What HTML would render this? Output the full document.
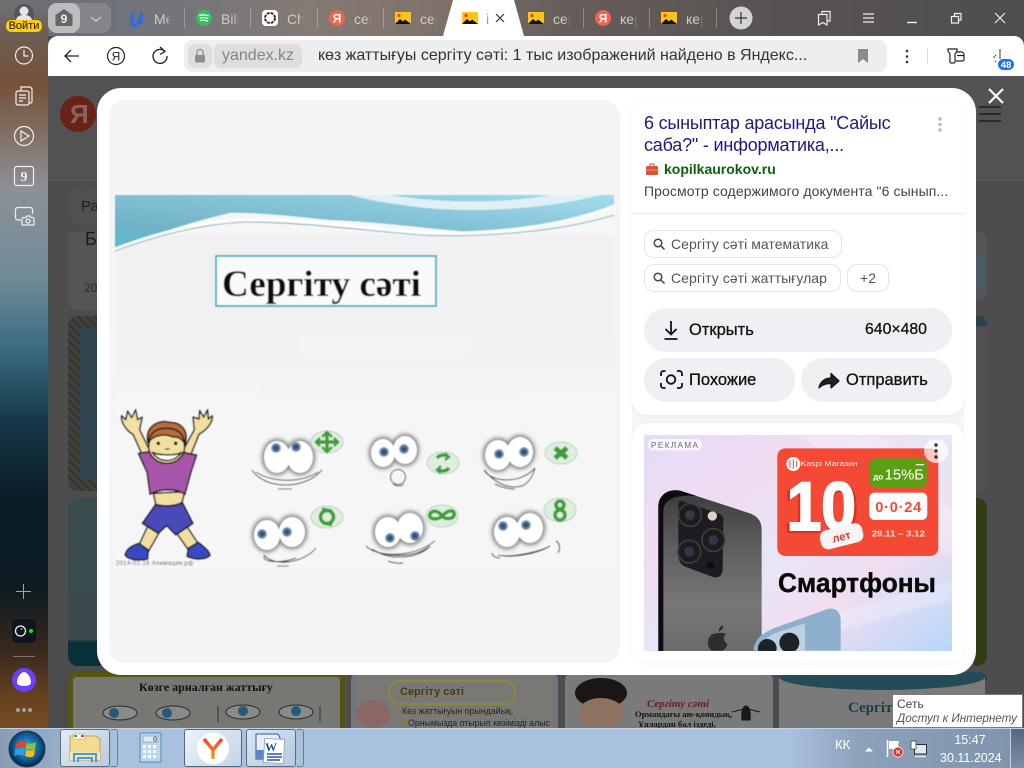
<!DOCTYPE html>
<html lang="ru"><head><meta charset="utf-8"><title>Сергіту сәті</title>
<style>
html,body{margin:0;padding:0;width:1024px;height:768px;overflow:hidden;background:#4d4d4d}
body{position:relative;font-family:"Liberation Sans","DejaVu Sans",sans-serif;color:#222}
.a{position:absolute;white-space:nowrap}
svg{position:absolute;left:0;top:0;overflow:visible}
.tt{font-size:14px;color:#d0ccc8;top:10px;overflow:hidden;height:18px;line-height:18px;-webkit-mask-image:linear-gradient(90deg,#000 70%,transparent);mask-image:linear-gradient(90deg,#000 70%,transparent)}
.sep{position:absolute;top:8px;width:1px;height:20px;background:rgba(255,255,255,.28)}
.chip{position:absolute;box-sizing:border-box;border:1px solid #e4e5e8;border-radius:10px;background:#fff;height:28px;line-height:26px;font-size:14px;color:#555;letter-spacing:.05px}
.btn{position:absolute;background:#eef0f4;border-radius:22px;height:44px;line-height:44px;font-size:16.5px;color:#111;-webkit-text-stroke:.3px #111}
</style></head><body>

<!-- wallpaper sidebar -->
<div class="a" style="left:0;top:0;width:48px;height:728px;background:linear-gradient(180deg,#6f7279 0,#6e5d52 35px,#75513a 85px,#7f6a5c 125px,#8c9198 190px,#6f8a97 280px,#3a6a7f 350px,#18384a 420px,#0a1c26 500px,#0d1b22 590px,#38281f 650px,#684320 700px,#784c26 728px)"></div>
<!-- tab strip -->
<div class="a" style="left:48px;top:0;width:976px;height:36px;background:linear-gradient(90deg,#6d7079 0,#74757a 130px,#857a74 260px,#7f736b 380px,#665d59 520px,#595453 700px,#4f4d4d 976px)"></div>

<!-- dimmed page -->
<div class="a" style="left:48px;top:76px;width:976px;height:652px;background:#4d4d4d"></div>
<div class="a" style="left:48px;top:76px;width:976px;height:104px;background:#525252;border-bottom:1px solid #5c5c5c"></div>
<div class="a" style="left:60px;top:96px;width:36px;height:36px;border-radius:50%;background:#6b2216"></div>
<div class="a" style="left:70px;top:99px;font:bold 26px 'Liberation Sans',sans-serif;color:#85655d">Я</div>
<div class="a" style="left:68px;top:188px;width:60px;height:36px;border-radius:14px;background:#505050;box-shadow:0 0 2px #5c5c5c"></div>
<div class="a" style="left:81px;top:198px;font-size:15px;color:#222">Ра</div>
<div class="a" style="left:68px;top:232px;width:40px;height:78px;border-radius:0 0 10px 10px;background:#555"></div>
<div class="a" style="left:85px;top:229px;font-size:18px;color:#1c1c1c">Бе</div>
<div class="a" style="left:84px;top:281px;font-size:12px;color:#2a2a2a">20</div>
<div class="a" style="left:68px;top:316px;width:40px;height:175px;border-radius:10px;background:repeating-linear-gradient(45deg,#4a3f33 0 3px,#30383c 3px 6px);"></div>
<div class="a" style="left:80px;top:328px;width:30px;height:151px;background:#2f444f"></div>
<div class="a" style="left:68px;top:498px;width:40px;height:168px;border-radius:10px;background:linear-gradient(180deg,#3b4c4e 0,#3a4a4c 84%,#07303a 86%,#07303a 100%)"></div>
<!-- right strip -->
<div class="a" style="left:974px;top:232px;width:13px;height:68px;border-radius:0 8px 8px 0;background:#565656"></div>
<div class="a" style="left:974px;top:252px;width:11px;height:38px;background:#4b5a64;border-radius:0 4px 4px 0"></div>
<div class="a" style="left:974px;top:316px;width:13px;height:10px;border-radius:0 8px 0 0;background:#28434e"></div>
<div class="a" style="left:974px;top:326px;width:13px;height:166px;background:#505050"></div>
<div class="a" style="left:974px;top:498px;width:13px;height:168px;border-radius:0 10px 10px 0;background:#303c12"></div>
<div class="a" style="left:974px;top:672px;width:13px;height:8px;border-radius:0 8px 0 0;background:#27424d"></div>
<div class="a" style="left:979px;top:106px;width:22px;height:2px;background:#2b2b2b"></div>
<div class="a" style="left:979px;top:113px;width:22px;height:2px;background:#2b2b2b"></div>
<div class="a" style="left:979px;top:120px;width:22px;height:2px;background:#2b2b2b"></div>

<!-- bottom tiles -->
<div class="a" style="left:68px;top:672px;width:267px;height:56px;border:5px solid #55570f;border-bottom:0;border-radius:8px 8px 0 0;background:#777774;box-sizing:content-box"></div>
<div class="a" style="left:139px;top:680px;font:bold 12px 'Liberation Serif',serif;color:#111">Көзге арналған жаттығу</div>
<svg width="1024" height="768">
 <g fill="#8a8a88" stroke="#2a2a2a" stroke-width="1">
  <ellipse cx="120" cy="713" rx="17" ry="7"/><ellipse cx="173" cy="713" rx="17" ry="7"/><ellipse cx="243" cy="712" rx="17" ry="7"/><ellipse cx="296" cy="712" rx="17" ry="7"/>
 </g>
 <circle cx="114" cy="713" r="5" fill="#245a78"/><circle cx="167" cy="713" r="5" fill="#245a78"/><circle cx="243" cy="711" r="5" fill="#245a78"/><circle cx="296" cy="711" r="5" fill="#245a78"/>
 <path d="M218 706v16M320 706v16" stroke="#333"/>
</svg>
<div class="a" style="left:351px;top:672px;width:207px;height:56px;border-radius:8px 8px 0 0;background:#70767c"></div>
<div class="a" style="left:356px;top:675px;width:196px;height:53px;background:#7a7874"></div>
<div class="a" style="left:388px;top:680px;width:124px;height:21px;border:2px solid #8a8a3a;border-radius:14px"></div>
<div class="a" style="left:400px;top:686px;font:bold 11px 'Liberation Sans',sans-serif;color:#4a3a0e">Сергіту сәті</div>
<div class="a" style="left:402px;top:706px;font-size:8.800px;color:#252525">Көз жаттығуын орындайық.</div>
<div class="a" style="left:403px;top:720px;width:4px;height:4px;background:#8a7a20"></div>
<div class="a" style="left:408px;top:718px;width:145px;overflow:hidden;font-size:8.800px;color:#252525">Орнымызда отырып көзімізді алыс бір</div>
<div class="a" style="left:356px;top:700px;width:34px;height:28px;border-radius:50%;background:#8a6763"></div>
<div class="a" style="left:565px;top:672px;width:208px;height:56px;border-radius:8px 8px 0 0;background:#7a7a78"></div>
<div class="a" style="left:575px;top:678px;width:52px;height:30px;border-radius:50%;background:#1b1614"></div>
<div class="a" style="left:578px;top:698px;width:46px;height:30px;border-radius:50%;background:#8d7262"></div>
<div class="a" style="left:647px;top:698px;font:italic bold 11px 'Liberation Serif',serif;color:#6a1e20">Сергіту сәті</div>
<div class="a" style="left:635px;top:709px;font:bold 8.5px 'Liberation Serif',serif;color:#161616">Ормандағы аю-қояндық,</div>
<div class="a" style="left:638px;top:719px;font:bold 8.5px 'Liberation Serif',serif;color:#161616">Ұялардан бал іздеді,</div>
<svg width="1024" height="768"><path d="M742 720c-1-8 1-14 4-14s5 6 4 14zM732 712l12-3M760 712l-12-3" fill="#181818" stroke="#181818"/></svg>
<div class="a" style="left:779px;top:672px;width:206px;height:56px;border-radius:8px 8px 0 0;background:#7a7a7a;overflow:hidden"><div style="position:absolute;left:0;top:-8px;width:206px;height:26px;background:#254a58;border-radius:0 0 50% 50%"></div></div>
<div class="a" style="left:848px;top:700px;font:bold 15px 'Liberation Serif',serif;color:#1c3a48">Сергіту</div>

<!-- toolbar -->
<div class="a" style="left:48px;top:36px;width:976px;height:40px;background:#fff;border-radius:10px 10px 0 0"></div>
<div class="a" style="left:184px;top:40px;width:703px;height:32px;background:#eeeeee;border-radius:8px"></div>
<div class="a" style="left:188px;top:44px;width:24px;height:24px;background:#dedede;border-radius:7px"></div>
<div class="a" style="left:214px;top:44px;width:88px;height:24px;background:#dedede;border-radius:7px"></div>
<div class="a" style="left:222px;top:47px;font-size:16px;line-height:18px;color:#858585">yandex.kz</div>
<div class="a" style="left:318px;top:47px;font-size:16px;line-height:18px;color:#333">көз жаттығуы сергіту сәті: 1 тыс изображений найдено в Яндекс...</div>

<!-- active tab -->
<svg width="1024" height="76" style="z-index:1">
 <path d="M443 36 L453 0 L514 0 L524 36 Z" fill="#fff"/>
</svg>
<div class="a tt" style="left:154px;width:17px;z-index:2">Me</div>
<div class="a tt" style="left:221px;width:18px;z-index:2">Bili</div>
<div class="a tt" style="left:287px;width:17px;z-index:2">Cha</div>
<div class="a tt" style="left:354px;width:17px;z-index:2">сер</div>
<div class="a tt" style="left:420px;width:17px;z-index:2">сер</div>
<div class="a tt" style="left:553px;width:17px;z-index:2">сер</div>
<div class="a tt" style="left:620px;width:17px;z-index:2">кер</div>
<div class="a tt" style="left:686px;width:17px;z-index:2">кер</div>
<div class="a" style="left:486px;top:10px;font-size:14px;line-height:18px;color:#999;z-index:2">і</div>
<div class="sep" style="left:184px"></div><div class="sep" style="left:250px"></div><div class="sep" style="left:317px"></div><div class="sep" style="left:383px"></div><div class="sep" style="left:583px"></div><div class="sep" style="left:649px"></div><div class="sep" style="left:716px"></div>

<!-- profile and group -->
<div class="a" style="left:48px;top:3px;width:63px;height:30px;border-radius:9px;background:rgba(255,255,255,.14)"></div>
<div class="a" style="left:48px;top:3px;width:32px;height:30px;border-radius:9px;background:rgba(255,255,255,.46)"></div>
<div class="a" style="left:14px;top:4px;width:20px;height:20px;border-radius:50%;background:#53565c"></div>
<div class="a" style="left:6px;top:20px;width:36px;height:12px;background:#ffcc00;border-radius:5px;font-size:11px;line-height:12px;text-align:center;color:#111;z-index:4">Войти</div>

<svg width="1024" height="768" style="z-index:3">
 <!-- profile figure -->
 <circle cx="24" cy="11" r="4.5" fill="#e8e6e4"/><path d="M16 20c1-4 4-5 8-5s7 1 8 5z" fill="#e8e6e4"/>
 <!-- group house -->
 <path d="M55.500 15 L64 9 L72.500 15 V24 a2 2 0 0 1-2 2 H57.500 a2 2 0 0 1-2-2z" fill="#666668"/>
 <text x="64" y="23" font-family="Liberation Sans" font-weight="bold" font-size="12" fill="#eee" text-anchor="middle">9</text>
 <path d="M91 17l5 4 5-4" fill="none" stroke="#c9c5c1" stroke-width="1.400"/>
 <!-- tab icons -->
 <path d="M133 12 L132 22 Q132 27 137 25 L142 13 Q141 20 141 24" fill="none" stroke="#2f6be0" stroke-width="3"/>
 <circle cx="204" cy="18" r="8" fill="#2fc15c"/><path d="M199 15.500q5-1.500 10 .5M199.500 18q5-1 9 .6M200 20.500q4-.8 8 .5" fill="none" stroke="#fff" stroke-width="1.200"/>
 <rect x="262" y="10" width="16" height="16" rx="4" fill="#fff"/><circle cx="270" cy="18" r="5" fill="none" stroke="#333" stroke-width="2" stroke-dasharray="3 1"/>
 <circle cx="337" cy="18" r="8" fill="#f8604a"/><text x="337" y="22.500" font-family="Liberation Sans" font-weight="bold" font-size="12" fill="#fff" text-anchor="middle">Я</text>
 <circle cx="603" cy="18" r="8" fill="#f8604a"/><text x="603" y="22.500" font-family="Liberation Sans" font-weight="bold" font-size="12" fill="#fff" text-anchor="middle">Я</text>
 <g id="ii"><rect x="395" y="12" width="16" height="12" fill="#fcc419"/><circle cx="399" cy="15.500" r="1.600" fill="#e42"/><path d="M395 24l5-5 3 2.500 2-2 6 4.500z" fill="#111"/></g>
 <use href="#ii" x="67"/><use href="#ii" x="133"/><use href="#ii" x="266"/>
 <!-- tab close -->
 <path d="M496 14l8 8M504 14l-8 8" stroke="#333" stroke-width="1.200"/>
 <!-- new tab -->
 <circle cx="741" cy="18" r="11.500" fill="#d6d4d2"/><path d="M741 12v12M735 18h12" stroke="#333" stroke-width="1.200"/>
 <!-- window icons -->
 <path d="M818.500 14.500h8.500v10.500l-4.250-2.500-4.250 2.500z" fill="none" stroke="#eee" stroke-width="1.200"/><path d="M822 14.500v-3h8v9.500h-3" fill="none" stroke="#eee" stroke-width="1.200"/>
 <path d="M863 14h11M863 18h11M863 22h11" stroke="#eee" stroke-width="1.200"/>
 <path d="M907 22.500h10" stroke="#eee" stroke-width="1.400"/>
 <path d="M951.500 16.500h7v6.500h-7zM954.500 16.500v-3h6.500v6.500h-2.500" fill="none" stroke="#eee" stroke-width="1.200"/>
 <path d="M995 13l10 10M1005 13l-10 10" stroke="#eee" stroke-width="1.200"/>

 <!-- toolbar icons -->
 <path d="M79 56H65.500M71 50l-6 6 6 6" fill="none" stroke="#222" stroke-width="1.300"/>
 <circle cx="116" cy="56" r="8.500" fill="none" stroke="#222" stroke-width="1.200"/><text x="116" y="60.500" font-family="Liberation Sans" font-size="12" fill="#222" text-anchor="middle">Я</text>
 <path d="M165 51.500a7 7 0 1 0 2 4.500" fill="none" stroke="#222" stroke-width="1.300"/><path d="M160 47l5 4.500-5 3" fill="none" stroke="#222" stroke-width="1.300"/>
 <rect x="195" y="55" width="10" height="7.500" rx="1.300" fill="#8e8e8e"/><path d="M197 55v-2.500a3 3 0 0 1 6 0V55" fill="none" stroke="#8e8e8e" stroke-width="1.300"/>
 <path d="M858 49h10v14l-5-4-5 4z" fill="#8a8a8a"/>
 <circle cx="907" cy="51" r="1.300" fill="#333"/><circle cx="907" cy="56.500" r="1.300" fill="#333"/><circle cx="907" cy="62" r="1.300" fill="#333"/>
 <path d="M927.500 48v16" stroke="#ddd"/>
 <path d="M948 49h9v2l-2 3v6a2 2 0 0 1-2 3h-1a2 2 0 0 1-2-3v-6l-2-3zM957 52h3a3 3 0 0 1 4 3v5a2 2 0 0 1-2 1h-6M957 55.500h7" fill="none" stroke="#222" stroke-width="1.200"/>
 <path d="M1000 49v10M996 56l-1-1M993 57h2M996 61l-1 1" stroke="#333" stroke-width="1"/>
 <rect x="998" y="59" width="16" height="11" rx="5.500" fill="#1a73e8"/><text x="1006" y="68" font-family="Liberation Sans" font-size="9.500" font-weight="bold" fill="#fff" text-anchor="middle">48</text>

 <!-- sidebar icons -->
 <g fill="none" stroke="#f2eeea" stroke-width="1.200">
  <circle cx="24" cy="55.500" r="8.500"/><path d="M24 50v6h4.500"/>
  <rect x="16" y="91" width="13" height="14" rx="2"/><path d="M29 103h1.500a1.500 1.500 0 0 0 1.500-1.500V89l-1.500-2H21v4"/><path d="M19 95h7M19 98h7M19 101h4"/>
  <circle cx="24" cy="136" r="9.500"/><path d="M21 131v10l8-5z"/>
  <rect x="14.500" y="166.500" width="19" height="19" rx="2.500"/>
  <path d="M21 220h-3a2.500 2.500 0 0 1-2.500-2.500V210a2.500 2.500 0 0 1 2.500-2.500h12a2.500 2.500 0 0 1 2.500 2.500v4"/>
  <path d="M22 219a1.500 1.500 0 0 1 1.500-1.500H26l1-1.500h3l1 1.500h1.500a1.500 1.500 0 0 1 1.500 1.500v6H22z"/><circle cx="28" cy="221" r="2"/>
 </g>
 <text x="24" y="181" font-family="Liberation Serif" font-size="14" font-weight="bold" fill="#f2eeea" text-anchor="middle">9</text>
 <path d="M23.500 584v15M16 591.500h15" stroke="#a9a5a1" stroke-width="1"/>
 <rect x="12" y="619" width="24" height="24" rx="5" fill="#10171c"/>
 <circle cx="20.500" cy="631" r="5" fill="#10171c" stroke="#eee" stroke-width="1.300"/><circle cx="21.500" cy="629" r=".9" fill="#bbb"/><circle cx="31" cy="631" r="2" fill="#1ae51a"/>
 <path d="M13 656.500h22" stroke="#80766a" stroke-width="1"/>
 <circle cx="24" cy="680" r="12" fill="#6b3ff5"/><path d="M24 672c3.500 0 7 6 7 10 0 3-3 4-7 4s-7-1-7-4c0-4 3.500-10 7-10z" fill="#fff"/>
 <circle cx="18" cy="710" r="2" fill="#a9a19a"/><circle cx="24" cy="710" r="2" fill="#a9a19a"/><circle cx="30" cy="710" r="2" fill="#a9a19a"/>
</svg>

<!-- modal -->
<div class="a" style="left:97px;top:88px;width:879px;height:587px;background:#fff;border-radius:24px;z-index:4"></div>
<div class="a" style="left:109px;top:100px;width:511px;height:563px;background:#f5f5f5;border-radius:16px;z-index:4"></div>
<div class="a" style="left:632px;top:100px;width:332px;height:563px;background:#f5f6f8;border-radius:16px;z-index:4"></div>
<div class="a" style="left:632px;top:100px;width:332px;height:315px;background:#fff;border-radius:16px;z-index:4;box-shadow:0 1px 6px rgba(0,0,0,.05)"></div>
<div class="a" style="left:632px;top:423px;width:332px;height:240px;background:#fff;border-radius:16px;z-index:4;box-shadow:0 1px 6px rgba(0,0,0,.05)"></div>
<div class="a" style="left:632px;top:213px;width:332px;height:1px;background:#eceded;z-index:4"></div>

<div style="position:absolute;left:0;top:0;z-index:5">
<div class="a" style="left:644px;top:112px;font-size:18px;line-height:22px;color:#1b1b82;letter-spacing:-.2px">6 сыныптар арасында "Сайыс</div>
<div class="a" style="left:644px;top:134px;font-size:18px;line-height:22px;color:#1b1b82;letter-spacing:-.2px">саба?" - информатика,...</div>
<div class="a" style="left:664px;top:161px;font-size:14px;line-height:17px;font-weight:bold;color:#0b620b">kopilkaurokov.ru</div>
<div class="a" style="left:644px;top:183px;font-size:14px;line-height:17px;color:#444;letter-spacing:.1px">Просмотр содержимого документа "6 сынып...</div>
<div class="chip" style="left:644px;top:230px;width:198px;padding-left:26px">Сергіту сәті математика</div>
<div class="chip" style="left:644px;top:264px;width:197px;padding-left:26px">Сергіту сәті жаттығулар</div>
<div class="chip" style="left:847px;top:264px;width:42px;text-align:center">+2</div>
<div class="btn" style="left:644px;top:308px;width:308px"><span class="a" style="left:45px">Открыть</span><span class="a" style="left:221px;font-size:15.800px">640×480</span></div>
<div class="btn" style="left:644px;top:358px;width:151px"><span class="a" style="left:45px">Похожие</span></div>
<div class="btn" style="left:801px;top:358px;width:151px"><span class="a" style="left:45px">Отправить</span></div>
</div>

<svg width="1024" height="768" style="z-index:6">
 <defs>
  <filter id="b1" x="-5%" y="-5%" width="110%" height="110%"><feGaussianBlur stdDeviation=".5"/></filter>
  <filter id="b3" x="-30%" y="-30%" width="160%" height="160%"><feGaussianBlur stdDeviation="2.200"/></filter>
  <filter id="b5" x="-10%" y="-10%" width="120%" height="120%"><feGaussianBlur stdDeviation="1.500"/></filter>
  <linearGradient id="tw" x1="0" y1="1" x2="1" y2="0"><stop offset="0" stop-color="#58bccd"/><stop offset=".25" stop-color="#72b2c8"/><stop offset=".6" stop-color="#86c4d8"/><stop offset="1" stop-color="#a4dcec"/></linearGradient>
  <linearGradient id="fade" x1="0" y1="0" x2="0" y2="1"><stop offset="0" stop-color="#f1f1f1" stop-opacity="1"/><stop offset=".7" stop-color="#f2f2f2" stop-opacity="1"/><stop offset="1" stop-color="#f6f6f6" stop-opacity="0"/></linearGradient>
  <linearGradient id="adb" x1="0" y1="0" x2="1" y2="1"><stop offset="0" stop-color="#e6dcf6"/><stop offset=".3" stop-color="#f0dcf2"/><stop offset=".5" stop-color="#e8e6f6"/><stop offset=".7" stop-color="#f0def0"/><stop offset="1" stop-color="#b8d6fa"/></linearGradient>
  <linearGradient id="ph" x1="0" y1="0" x2="0" y2="1"><stop offset="0" stop-color="#3b3b3d"/><stop offset=".35" stop-color="#5e5e60"/><stop offset=".7" stop-color="#777"/><stop offset="1" stop-color="#6a6a6a"/></linearGradient>
  <radialGradient id="irs"><stop offset="0" stop-color="#2d3d54"/><stop offset=".4" stop-color="#3c5a7e"/><stop offset="1" stop-color="#8fb0d0"/></radialGradient>
  <clipPath id="adc"><rect x="644" y="435" width="308" height="216"/></clipPath>
 </defs>

 <!-- close modal -->
 <path d="M989 89l14 14M1003 89l-14 14" stroke="#fff" stroke-width="2.200"/>

 <!-- chip/button icons -->
 <g fill="none" stroke="#444" stroke-width="1.500">
  <circle cx="658" cy="243" r="3.800"/><path d="M661 246l3.500 3.500"/>
  <circle cx="658" cy="277" r="3.800"/><path d="M661 280l3.500 3.500"/>
 </g>
 <g fill="none" stroke="#111" stroke-width="1.800">
  <path d="M671 321v13M665.500 329l5.500 5.500 5.500-5.500M664.500 339h13"/>
  <path d="M661 376v-2.500a2.500 2.500 0 0 1 2.500-2.500h2M677 371h2.500a2.500 2.500 0 0 1 2.500 2.500V376M661 383v2.500a2.500 2.500 0 0 0 2.500 2.500h2M677 388h2.500a2.500 2.500 0 0 0 2.500-2.500V383"/>
  <circle cx="671" cy="379.500" r="4.300"/>
 </g>
 <path d="M819 388c1-7 7-10 12-10v-4.500l8 7.500-8 7v-4.500c-5 0-9 1-12 4.500z" fill="#222" stroke="#111" stroke-width="1.200" stroke-linejoin="round"/>
 <circle cx="940" cy="119" r="1.700" fill="#bbb"/><circle cx="940" cy="124.500" r="1.700" fill="#bbb"/><circle cx="940" cy="130" r="1.700" fill="#bbb"/>
 <rect x="646" y="166" width="12" height="9" rx="1.500" fill="#d6523a"/><path d="M650 166v-2h4v2" fill="none" stroke="#c05040" stroke-width="1"/><path d="M646 170h12" stroke="#f5a08e" stroke-width=".8"/>

 <!-- image -->
 <g filter="url(#b1)">
  <rect x="115" y="195" width="499" height="375" fill="#f6f6f6"/>
  <rect x="115" y="235" width="499" height="180" fill="url(#fade)"/>
  <g fill="#f4f4f4"><rect x="300" y="335" width="170" height="20"/><rect x="260" y="375" width="260" height="22"/></g>
  <path d="M115 195H614V206C580 222 520 234 470 232C420 228 380 222 330 220C290 216 255 212 230 213C190 222 150 236 115 250Z" fill="url(#tw)"/>
  <path d="M350 195C380 203 425 210 470 210C525 210 570 203 600 195H550C515 202 450 205 390 195Z" fill="#dff1f7"/>
  <path d="M115 249C160 232 205 222 235 220C300 218 360 228 420 232C480 236 560 228 614 206" fill="none" stroke="#fff" stroke-width="3"/>
  <path d="M115 251C160 234 205 224 245 222C300 222 360 230 420 235C480 238 560 232 614 215" fill="none" stroke="#4b9eb8" stroke-width=".8"/>
  <rect x="216" y="256" width="220" height="50" fill="#f9fbfb" stroke="#4fb0cc" stroke-width="2"/>
  <text x="222" y="296" font-family="Liberation Serif" font-weight="bold" font-size="37" textLength="199" lengthAdjust="spacingAndGlyphs" fill="#0a0a0a">Сергіту сәті</text>

  <!-- kid -->
  <g transform="translate(105,395) scale(.3333)" stroke="#151515" stroke-width="4.500" stroke-linejoin="round">
   <path d="M112 180 L84 118 C64 108 46 80 50 62 L62 74 L68 48 L80 68 L92 44 L98 74 L112 66 L104 104 L136 170Z" fill="#f2e0a2"/>
   <path d="M258 178 L282 118 C300 108 325 85 322 62 L310 72 L308 44 L296 66 L284 46 L282 72 L264 66 L268 104 L232 170Z" fill="#f2e0a2"/>
   <path d="M145 295 L240 290 L226 340 L155 340Z" fill="#f2e0a2"/>
   <path d="M130 390 L98 458 L130 470 L170 400Z M212 410 L250 465 L282 450 L240 385Z" fill="#f2e0a2"/>
   <path d="M100 175 L135 170 L185 195 L232 172 L275 180 L258 232 L240 298 C215 280 165 280 135 298 L126 232Z" fill="#a655a8"/>
   <path d="M152 328 C175 335 210 335 232 322 L264 385 L212 420 L185 392 L160 415 L112 385Z" fill="#4a49b9"/>
   <path d="M102 445 L130 465 L128 492 C100 498 70 495 60 480 C64 460 85 450 102 445Z" fill="#3a48c0"/>
   <path d="M280 442 C296 455 316 470 315 482 C295 498 262 492 246 484 L250 460Z" fill="#3a48c0"/>
   <path d="M128 140 C120 95 160 72 195 82 C232 82 252 110 240 148 L132 148Z" fill="#b66c3b"/>
   <ellipse cx="185" cy="155" rx="54" ry="50" fill="#f2e0a2"/>
   <path d="M130 140 C136 105 168 98 190 100 C218 100 236 118 240 146 C228 128 214 124 204 126 C180 116 150 118 130 140Z" fill="#b66c3b"/>
   <path d="M142 172 C165 205 205 205 230 172 C215 182 160 182 142 172Z" fill="#fff"/>
   <path d="M180 160 q8 6 14 0" fill="none" stroke-width="3"/>
   <circle cx="160" cy="145" r="3" fill="#111"/><circle cx="212" cy="145" r="3" fill="#111"/>
  </g>
  <text x="116" y="565" font-family="Liberation Sans" font-size="6" fill="#555" textLength="77">2014-01-18 Анимация.рф</text>

  <!-- faces -->
  <g>
   <ellipse cx="277" cy="457" rx="15" ry="18" fill="#777" filter="url(#b3)"/><ellipse cx="300" cy="457" rx="15" ry="18" fill="#777" filter="url(#b3)"/>
   <ellipse cx="277" cy="457" rx="13" ry="16" fill="#fff"/><ellipse cx="300" cy="457" rx="13" ry="16" fill="#fff"/>
   <circle cx="276" cy="448" r="5" fill="url(#irs)"/><circle cx="296" cy="447" r="5" fill="url(#irs)"/>
  </g>
  <path d="M252 470C265 490 305 490 322 470M256 472C270 482 300 484 318 472M278 489h14" fill="none" stroke="#444" stroke-width="1"/>
  <g>
   <ellipse cx="267" cy="535" rx="15" ry="17" fill="#777" filter="url(#b3)"/><ellipse cx="292" cy="532" rx="15" ry="17" fill="#777" filter="url(#b3)"/>
   <ellipse cx="267" cy="535" rx="13" ry="15" fill="#fff"/><ellipse cx="292" cy="532" rx="13" ry="15" fill="#fff"/>
   <circle cx="262" cy="534" r="5" fill="url(#irs)"/><circle cx="287" cy="532" r="5" fill="url(#irs)"/>
  </g>
  <path d="M264 555C275 568 305 562 316 548M264 556C262 562 280 564 296 558M277 566h12" fill="none" stroke="#444" stroke-width="1"/>
  <g>
   <ellipse cx="383" cy="453" rx="14" ry="16" fill="#777" filter="url(#b3)"/><ellipse cx="405" cy="450" rx="14" ry="16" fill="#777" filter="url(#b3)"/>
   <ellipse cx="383" cy="453" rx="12" ry="14" fill="#fff"/><ellipse cx="405" cy="450" rx="12" ry="14" fill="#fff"/>
   <circle cx="384" cy="452" r="5" fill="url(#irs)"/><circle cx="404" cy="449" r="5" fill="url(#irs)"/>
  </g>
  <circle cx="398" cy="477" r="7.500" fill="none" stroke="#444" stroke-width="1"/><path d="M393 484q6 4 11 0" fill="none" stroke="#555"/>
  <g>
   <ellipse cx="498" cy="455" rx="15" ry="17" fill="#777" filter="url(#b3)"/><ellipse cx="520" cy="452" rx="15" ry="17" fill="#777" filter="url(#b3)"/>
   <ellipse cx="498" cy="455" rx="13" ry="15" fill="#fff"/><ellipse cx="520" cy="452" rx="13" ry="15" fill="#fff"/>
   <circle cx="499" cy="454" r="5" fill="url(#irs)"/><circle cx="524" cy="452" r="5" fill="url(#irs)"/>
  </g>
  <path d="M484 470C490 482 520 485 535 468C533 475 530 482 522 486C508 490 494 482 484 470ZM495 484q10 5 20 5" fill="none" stroke="#444" stroke-width="1"/>
  <g>
   <ellipse cx="388" cy="532" rx="15" ry="17" fill="#777" filter="url(#b3)"/><ellipse cx="410" cy="528" rx="15" ry="17" fill="#777" filter="url(#b3)"/>
   <ellipse cx="388" cy="532" rx="13" ry="15" fill="#fff"/><ellipse cx="410" cy="528" rx="13" ry="15" fill="#fff"/>
   <circle cx="390" cy="538" r="5" fill="url(#irs)"/><circle cx="415" cy="536" r="5" fill="url(#irs)"/>
  </g>
  <path d="M366 546C375 556 410 560 435 541M372 549C385 558 415 558 430 546C420 558 390 562 372 549M388 561q8 3 15 2" fill="none" stroke="#444" stroke-width="1"/>
  <g>
   <ellipse cx="507" cy="532" rx="15" ry="17" fill="#777" filter="url(#b3)"/><ellipse cx="530" cy="528" rx="15" ry="17" fill="#777" filter="url(#b3)"/>
   <ellipse cx="507" cy="532" rx="13" ry="15" fill="#fff"/><ellipse cx="530" cy="528" rx="13" ry="15" fill="#fff"/>
   <circle cx="503" cy="526" r="5" fill="url(#irs)"/><circle cx="526" cy="525" r="5" fill="url(#irs)"/>
  </g>
  <path d="M498 555C510 558 535 555 550 546C540 552 510 558 498 555ZM492 553q0 4 8 5M556 541q6 4 2 12" fill="none" stroke="#444" stroke-width="1.100"/>

  <!-- badges -->
  <g fill="#dfeedd" stroke="#b8d4c0" stroke-width="1">
   <ellipse cx="327" cy="442" rx="16" ry="11"/><ellipse cx="327" cy="517" rx="16" ry="11"/><ellipse cx="443" cy="463" rx="16" ry="11"/>
   <ellipse cx="561" cy="453" rx="16" ry="11"/><ellipse cx="442" cy="516" rx="16" ry="11"/><ellipse cx="560" cy="510" rx="16" ry="12"/>
  </g>
  <g fill="none" stroke="#3e9c3b" stroke-width="3.500">
   <path d="M317 442h20M327 434v16" stroke-width="3.500"/><path d="M322 437l5-5 5 5M322 447l5 5 5-5M320 438l-4 4 4 4M334 438l4 4-4 4" stroke-width="2.500"/>
   <circle cx="327" cy="517" r="6.500"/><path d="M322 509l10 2M332 525l-9-2" stroke-width="3"/>
   <path d="M437 458a8 8 0 0 1 10-2M449 468a8 8 0 0 1-10 2"/><path d="M445 453l4 4-4 3M441 466l-4 4 4 3" stroke-width="2.500"/>
   <path d="M555 448l12 10M567 448l-12 10" stroke-width="5"/>
   <path d="M442 516c-4-6-10-6-12-2-2 5 7 7 12 2s10-7 12-3c2 5-7 8-12 3z"/>
   <circle cx="560" cy="505" r="4"/><circle cx="560" cy="515" r="5"/>
  </g>
 </g>

 <!-- Ad -->
 <g clip-path="url(#adc)">
  <rect x="644" y="435" width="308" height="216" fill="url(#adb)"/>
  <path d="M800 435L952 560V510L880 435ZM760 651L952 600V580L700 651Z" fill="#fff" opacity=".25" filter="url(#b5)"/>
  <g transform="translate(630,420) scale(.3333)">
   <g filter="url(#b1)">
    <path d="M85 260C85 225 115 205 150 212L360 280C385 290 395 305 395 330V700H85Z" fill="url(#ph)"/>
    <path d="M85 260C85 225 115 205 150 212L200 228C150 225 105 230 100 270V700H85Z" fill="#111"/>
    <path d="M152 242L265 280C278 284 282 296 280 308L278 450C276 470 262 476 246 470L165 440C150 432 145 420 145 405V258C145 248 148 244 152 242Z" fill="#1e1e20"/>
    <circle cx="180" cy="285" r="34" fill="#1a1a1e" stroke="#3c3c40" stroke-width="5"/><circle cx="180" cy="285" r="15" fill="#3a3648"/>
    <circle cx="250" cy="360" r="34" fill="#1a1a1e" stroke="#3c3c40" stroke-width="5"/><circle cx="250" cy="360" r="15" fill="#35314a"/>
    <circle cx="178" cy="395" r="34" fill="#1a1a1e" stroke="#3c3c40" stroke-width="5"/><circle cx="178" cy="395" r="15" fill="#35314a"/>
    <circle cx="247" cy="288" r="14" fill="#d8d2c8"/><circle cx="242" cy="436" r="11" fill="#0c0c0c"/>
    <path d="M262 640c-22 0-28 15-28 30 0 12 8 22 14 22h30c8-6 14-14 14-20-12-8-14-22-4-30-6-4-14-4-26-2zM266 634c0-10 6-16 14-18 0 10-6 16-14 18z" fill="#2d2d2f"/>
    <path d="M370 692C372 660 395 640 430 625L590 568C615 560 632 575 632 600V692Z" fill="#8fb0cc"/>
    <path d="M395 692C398 660 420 645 440 638L525 610V692Z" fill="#bcd2e4"/>
    <circle cx="412" cy="685" r="28" fill="#1f2128"/><circle cx="478" cy="668" r="30" fill="#1f2128"/>
   </g>
   <rect x="442" y="85" width="483" height="323" rx="24" fill="#f44a35"/>
   <circle cx="490" cy="132" r="21" fill="#fff"/><path d="M480 120v24M490 118v28M500 122v20" stroke="#f44a35" stroke-width="3"/>
   <text x="512" y="138" font-family="Liberation Sans" font-size="22" fill="#ffe6e0" textLength="171" lengthAdjust="spacingAndGlyphs">Kaspi Магазин</text>
   <rect x="718" y="115" width="174" height="87" rx="20" fill="#5aa012"/>
   <text x="730" y="178" font-family="Liberation Sans" font-weight="bold" font-size="24" fill="#fff">до</text>
   <text x="764" y="178" font-family="Liberation Sans" font-size="44" fill="#fff" textLength="118" lengthAdjust="spacingAndGlyphs">15%Б</text>
   <path d="M858 134h24" stroke="#fff" stroke-width="4"/>
   <rect x="718" y="218" width="174" height="82" rx="16" fill="#fff"/>
   <text x="736" y="276" font-family="Liberation Sans" font-weight="bold" font-size="44" fill="#f44a35" textLength="138">0·0·24</text>
   <text x="725" y="350" font-family="Liberation Sans" font-weight="bold" font-size="25" fill="#ffe4de" textLength="160" lengthAdjust="spacingAndGlyphs">29.11 – 3.12</text>
   <text x="462" y="334" font-family="Liberation Sans" font-weight="bold" font-size="205" fill="#d92e1f" stroke="#d92e1f" stroke-width="8" textLength="222" lengthAdjust="spacingAndGlyphs">10</text>
   <text x="470" y="330" font-family="Liberation Sans" font-weight="bold" font-size="205" fill="#fff" stroke="#fff" stroke-width="6" textLength="208" lengthAdjust="spacingAndGlyphs">10</text>
   <rect x="570" y="320" width="130" height="58" rx="22" fill="#f7f4f3" transform="rotate(-14 634 349)"/>
   <text x="634" y="362" font-family="Liberation Sans" font-weight="bold" font-size="34" fill="#e23a28" text-anchor="middle" transform="rotate(-14 634 349)">лет</text>
   <text x="444" y="516" font-family="Liberation Sans" font-weight="bold" font-size="80" fill="#080808" stroke="#080808" stroke-width="1.200" textLength="474" lengthAdjust="spacingAndGlyphs">Смартфоны</text>
  </g>
  <rect x="648" y="439" width="54" height="11.500" rx="5.700" fill="#fff" opacity=".75"/>
  <text x="651" y="448" font-family="Liberation Sans" font-size="8" fill="#666" textLength="47">РЕКЛАМА</text>
  <circle cx="936" cy="451" r="12" fill="#fff" opacity=".7"/>
  <circle cx="936" cy="445" r="1.700" fill="#333"/><circle cx="936" cy="451" r="1.700" fill="#333"/><circle cx="936" cy="457" r="1.700" fill="#333"/>
 </g>
</svg>

<!-- taskbar -->
<div class="a" style="left:0;top:728px;width:1024px;height:40px;background:linear-gradient(90deg,#8a9db5 0,#95abc6 52px,#a8c1dd 120px,#a8c1dd 790px,#8ca1ba 860px,#7f93ab 1024px);border-top:1px solid #c2d2e4;box-sizing:border-box;z-index:7"></div>
<div class="a" style="left:60px;top:729px;width:50px;height:38px;box-sizing:border-box;border:1px solid #5d6d80;border-radius:3px;background:linear-gradient(135deg,#e3ecf5,#b8cbe0);z-index:7"></div>
<div class="a" style="left:111px;top:729px;width:7px;height:38px;box-sizing:border-box;border:1px solid #6d7d90;border-left:0;border-radius:0 3px 3px 0;z-index:7"></div>
<div class="a" style="left:184px;top:729px;width:58px;height:38px;box-sizing:border-box;border:1px solid #55657a;border-radius:3px;background:linear-gradient(135deg,#eef3f9,#c2d3e6);z-index:7"></div>
<div class="a" style="left:246px;top:729px;width:50px;height:38px;box-sizing:border-box;border:1px solid #5d6d80;border-radius:3px;background:linear-gradient(135deg,#dbe6f2,#b4c8de);z-index:7"></div>
<div class="a" style="left:297px;top:729px;width:7px;height:38px;box-sizing:border-box;border:1px solid #6d7d90;border-left:0;border-radius:0 3px 3px 0;z-index:7"></div>
<div class="a" style="left:1010px;top:729px;width:14px;height:39px;background:linear-gradient(180deg,#55677c,#7d90a6);border-left:1px solid #c5d3e3;box-sizing:border-box;z-index:7"></div>
<div class="a" style="left:835px;top:737px;font-size:13px;line-height:16px;color:#fff;z-index:8">КК</div>
<div class="a" style="left:940px;top:732px;width:60px;text-align:center;font-size:12.500px;line-height:16px;color:#fff;z-index:8">15:47</div>
<div class="a" style="left:940px;top:750px;width:60px;text-align:center;font-size:12.500px;line-height:16px;color:#fff;z-index:8">30.11.2024</div>
<div class="a" style="left:892px;top:694px;width:131px;height:34px;box-sizing:border-box;background:#fff;border:1px solid #7a7a7a;z-index:8"></div>
<div class="a" style="left:897px;top:697px;font-size:12px;line-height:14px;color:#444;z-index:9">Сеть</div>
<div class="a" style="left:897px;top:712px;font-size:11.700px;line-height:14px;font-style:italic;color:#555;z-index:9">Доступ к Интернету</div>

<svg width="1024" height="768" style="z-index:9">
 <defs>
  <radialGradient id="orb" cx=".5" cy=".45"><stop offset="0" stop-color="#3fa4d6"/><stop offset=".7" stop-color="#0f5f98"/><stop offset="1" stop-color="#082f55"/></radialGradient>
  <linearGradient id="yy" x1="0" y1="0" x2="0" y2="1"><stop offset="0" stop-color="#ff3d2a"/><stop offset="1" stop-color="#ff9a1a"/></linearGradient>
 </defs>
 <circle cx="27" cy="749" r="18" fill="url(#orb)" stroke="#223a55" stroke-width="1"/>
 <path d="M17 742c4-2 6-1 9 0l-1 6c-3-1-6-2-10 0z" fill="#e3452b"/><path d="M27 743c3 1 6 1 9-1l-1 7c-3 1-6 1-9 0z" fill="#8ac33c"/>
 <path d="M15 749c4-2 7-1 10 0l-1 7c-3-1-6-2-10 0z" fill="#2c9be0"/><path d="M26 750c3 1 6 1 9-1l-1 7c-3 2-6 1-9 0z" fill="#f6b91f"/>
 <!-- explorer -->
 <path d="M70 736h26l4 3v21H70z" fill="#f3dc92" stroke="#c2a24f"/><rect x="73" y="734" width="12" height="5" fill="#fff" stroke="#c2a24f" stroke-width=".6"/><rect x="74" y="735" width="3" height="2" fill="#35a04a"/><rect x="81" y="735" width="3" height="2" fill="#d33"/>
 <path d="M70 752h30v8H70z" fill="#f6e6b0"/><path d="M74 762v-8h22v8M78 762v-4h14v4" fill="none" stroke="#4b9ad2" stroke-width="2"/>
 <!-- calc -->
 <rect x="140" y="733" width="21" height="29" rx="1" fill="#bcd7ec" stroke="#4d8ab7"/><rect x="143" y="736" width="15" height="6" fill="#dfeaf3" stroke="#6f7f8f" stroke-width=".5"/>
 <text x="153" y="741.500" font-family="Liberation Mono" font-size="7" fill="#333">0</text>
 <g fill="#fff"><rect x="143" y="745" width="3" height="3"/><rect x="148" y="745" width="3" height="3"/><rect x="153" y="745" width="3" height="3"/><rect x="143" y="750" width="3" height="3"/><rect x="148" y="750" width="3" height="3"/><rect x="153" y="750" width="3" height="3"/><rect x="143" y="755" width="3" height="3"/><rect x="148" y="755" width="3" height="3"/><rect x="153" y="755" width="3" height="3"/></g>
 <!-- yandex -->
 <circle cx="213" cy="748.500" r="16" fill="#fff"/><path d="M204 739l9 11 9-11M213 750v9" fill="none" stroke="url(#yy)" stroke-width="3.400" stroke-linejoin="round"/>
 <!-- word -->
 <path d="M256 734h22l2 4v21h-24z" fill="#e7eef8" stroke="#2b579a"/><rect x="256" y="750" width="10" height="9" fill="#5a86c8"/>
 <rect x="264" y="739" width="20" height="24" fill="#fff" stroke="#8aa2c2" stroke-width=".8" transform="rotate(3 274 751)"/>
 <text x="265" y="751" font-family="Liberation Serif" font-weight="bold" font-size="12" fill="#1d4f9e">W</text>
 <path d="M267 754h15M267 757h15M267 760h13" stroke="#2b579a" stroke-width="1.400"/>
 <!-- tray -->
 <path d="M865 751.500l4-4 4 4z" fill="#fff"/>
 <path d="M887.500 740v17" stroke="#fff" stroke-width="1.500"/><path d="M889 741h10l-1 4 2 4h-11z" fill="#fff"/><circle cx="898" cy="752" r="5" fill="#d9302a" stroke="#fff" stroke-width=".7"/><path d="M896 750l4 4M900 750l-4 4" stroke="#fff" stroke-width="1.100"/>
 <rect x="914.500" y="744.500" width="12" height="9.500" fill="#dfe8f0" stroke="#2a2f36" stroke-width="1"/><path d="M915 756.500h11" stroke="#eee" stroke-width="1.400"/>
 <rect x="911" y="741" width="5" height="8" fill="#fff" stroke="#333" stroke-width=".7"/>
</svg>
</body></html>
